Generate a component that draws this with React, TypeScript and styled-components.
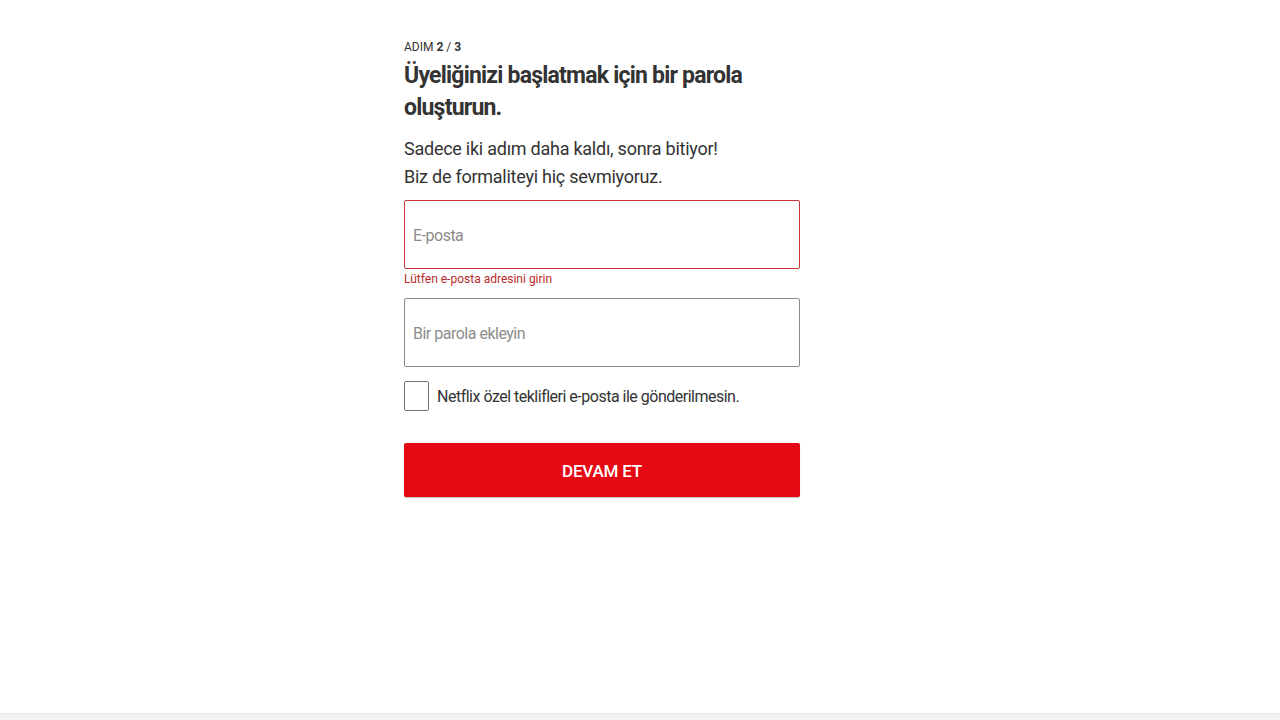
import { createGlobalStyle, styled } from "styled-components";

const GlobalStyle = createGlobalStyle`
    html, body {
        margin: 0;
        padding: 0;
        background: #fff;
        font-family: Roboto, "Liberation Sans", Arial, sans-serif;
        color: #333;
    }
`;

const Page = styled.div`
    display: flex;
    flex-direction: column;
    min-height: 720px;
`;

const Main = styled.main`
    flex: 1;
    display: flex;
    justify-content: center;
    padding-top: 39px;
`;

const Form = styled.form`
    width: 396px;
    margin-right: 76px;
    display: flex;
    flex-direction: column;
`;

const StepLabel = styled.span`
    font-size: 12px;
    line-height: 16px;
    color: #333;
    b {
        font-weight: 700;
    }
`;

const Title = styled.h1`
    margin: 5px 0 0;
    font-size: 23px;
    line-height: 32px;
    font-weight: 700;
    letter-spacing: -0.78px;
    color: #333;
`;

const Lead = styled.p`
    margin: 11px 0 0;
    font-size: 18px;
    line-height: 28px;
    letter-spacing: -0.25px;
    color: #333;
`;

const Field = styled.div<{ $gap: number }>`
    margin-top: ${(props) => props.$gap}px;
    display: flex;
    flex-direction: column;
`;

const Input = styled.input<{ $error?: boolean }>`
    box-sizing: border-box;
    width: 100%;
    height: 69px;
    padding: 2px 8px 0;
    border: 1px solid ${(props) => (props.$error ? "#c9373b" : "#8c8c8c")};
    border-radius: 2px;
    font-family: inherit;
    font-size: 16px;
    letter-spacing: -0.5px;
    color: #333;
    outline: none;
    &::placeholder {
        color: #8c8c8c;
    }
`;

const ErrorText = styled.span`
    margin-top: 2px;
    font-size: 12px;
    line-height: 16px;
    color: #b92d2b;
`;

const CheckRow = styled.label`
    margin-top: 14px;
    display: flex;
    align-items: center;
    gap: 8px;
    font-size: 16px;
    letter-spacing: -0.5px;
    color: #333;
`;

const Box = styled.span`
    box-sizing: border-box;
    width: 25px;
    height: 30px;
    border: 1px solid #737373;
    border-radius: 2px;
    background: #fff;
`;

const Submit = styled.button`
    margin-top: 32px;
    height: 54px;
    padding-top: 2px;
    border: none;
    border-radius: 2px;
    background: #e50914;
    color: #fff;
    font-family: inherit;
    font-size: 17px;
    font-weight: 500;
    letter-spacing: -0.2px;
    box-shadow: 0 1px 1px rgba(0, 0, 0, 0.25);
    cursor: pointer;
`;

const Footer = styled.footer`
    height: 6px;
    border-top: 1px solid #e6e6e6;
    background: #f3f3f3;
`;

export default function App() {
    return (
        <Page>
            <GlobalStyle />
            <Main>
                <Form onSubmit={(e) => e.preventDefault()}>
                    <StepLabel>
                        ADIM <b>2</b> / <b>3</b>
                    </StepLabel>
                    <Title>
                        Üyeliğinizi başlatmak için bir parola
                        <br />
                        oluşturun.
                    </Title>
                    <Lead>
                        Sadece iki adım daha kaldı, sonra bitiyor!
                        <br />
                        Biz de formaliteyi hiç sevmiyoruz.
                    </Lead>
                    <Field $gap={9}>
                        <Input $error type="email" placeholder="E-posta" />
                        <ErrorText>Lütfen e-posta adresini girin</ErrorText>
                    </Field>
                    <Field $gap={11}>
                        <Input type="password" placeholder="Bir parola ekleyin" />
                    </Field>
                    <CheckRow>
                        <Box />
                        Netflix özel teklifleri e-posta ile gönderilmesin.
                    </CheckRow>
                    <Submit type="submit">DEVAM ET</Submit>
                </Form>
            </Main>
            <Footer />
        </Page>
    );
}
